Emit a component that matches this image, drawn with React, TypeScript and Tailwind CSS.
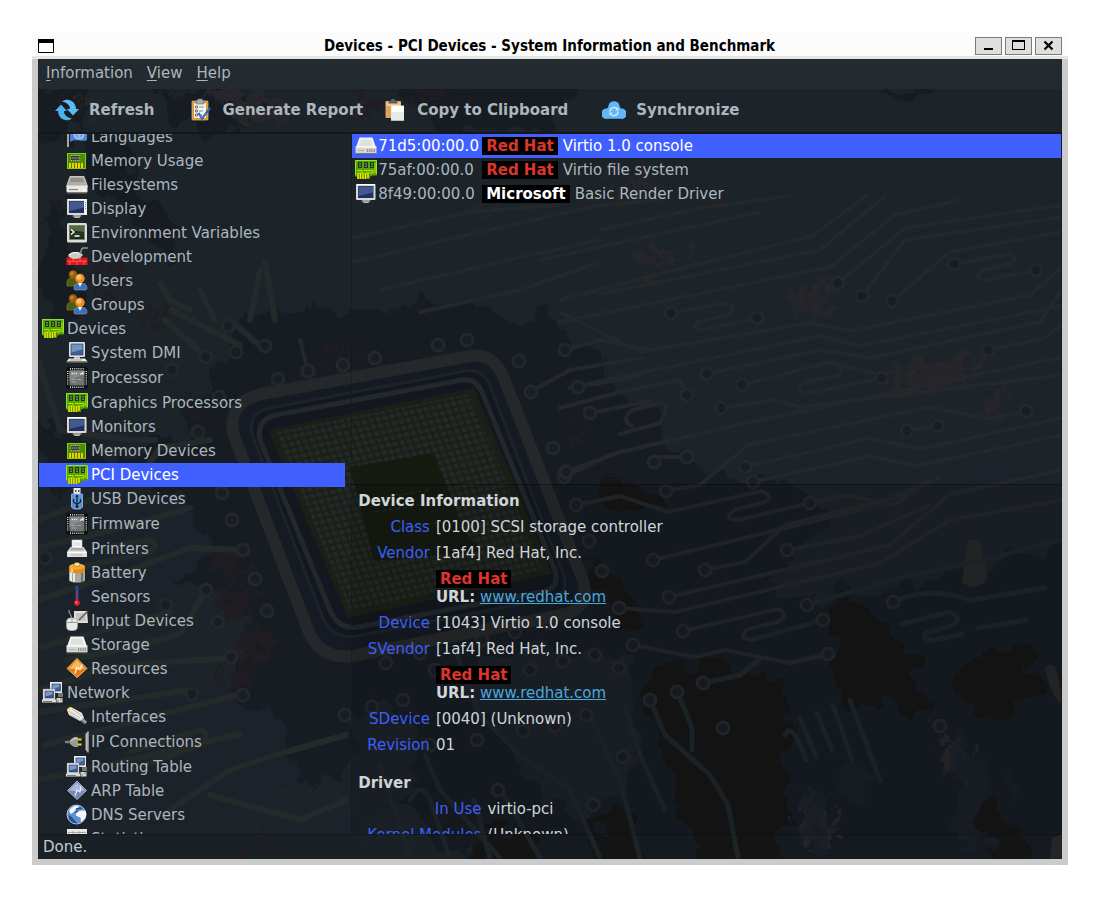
import type { ReactNode } from "react";

/* ---------- icon drawings, all on a 24 unit grid ---------- */

const Board = () => (
  <>
    <path d="M1 2h22v15.500h-5l-1 1H1z" fill="#4fa800" />
    <path d="M1.500 17V2.500h21V16" stroke="#8ae234" fill="none" />
    <path d="M21 5v10M3 12.500h5v3M10 12.500h9v2.500h-7M4 15h3" stroke="#c8dc00" strokeWidth="1" fill="none" />
    <path d="M4 4h4v6H4zM10 4h4v6h-4zM16 4h4v6h-4z" fill="#26331b" />
    <path d="M6 5v4M12 5v4M18 5v4" stroke="#a9b79c" strokeWidth="1.200" strokeDasharray="1.500 1" />
    <path d="M3 15.500h13V21H3z" fill="#4f8a06" />
    <path d="M4 15v6M6.500 15v6M9 15v6M11.500 15v6M14 15v5" stroke="#f2e300" strokeWidth="1.500" />
  </>
);

const Ram = () => (
  <>
    <rect x="2.500" y="4.500" width="18" height="15" fill="#4c8c08" stroke="#73d216" />
    <path d="M4 14h15v5H4z" fill="#6b6f00" />
    <path d="M5 14v5M8 14v5M11 14v5M14 14v5M17 14v5" stroke="#f5dc00" strokeWidth="1.800" />
    <path d="M6 7h8v5H6z" fill="#3d4038" />
    <path d="M6 6.500h9M5 9h10M6 11.500h9" stroke="#b9bdb3" strokeWidth="1.200" strokeDasharray="1.200 .9" />
  </>
);

const Drive = () => (
  <>
    <path d="M5.500 3.500h13L22 13.500H2z" fill="#f4f4f2" />
    <path d="M5 12l2-6.500h10L19 12z" fill="#e0e0dd" />
    <path d="M1.500 13h21v6.500h-21z" fill="#d6d6d2" />
    <path d="M1.500 13h21" stroke="#fff" />
    <path d="M4 16.500h6" stroke="#aeb0aa" />
    <path d="M13 16.500h8" stroke="#8d8f8a" strokeWidth="3" strokeDasharray="1 .8" />
    <path d="M2 20h20" stroke="#555753" />
  </>
);

const Disk = () => (
  <>
    <path d="M5 3.500h14l3.500 10h-21z" fill="#b0aca7" stroke="#deddd9" strokeWidth=".8" />
    <path d="M6 5h12l1 4H5z" fill="#938e87" />
    <rect x="1.500" y="12.500" width="21" height="7" rx="1" fill="#e8e8e5" />
    <path d="M4 16.500h9" stroke="#888a85" strokeWidth="1.200" />
    <circle cx="19" cy="17" r="1" fill="#fff" />
    <path d="M2 20h20" stroke="#6d6f6b" />
  </>
);

const Monitor = () => (
  <>
    <rect x="2" y="2" width="19.500" height="16" rx="1" fill="#d9d9d6" />
    <rect x="4" y="4" width="15.500" height="12" fill="#1f2f5f" />
    <path d="M4.500 4.500h14.500v6L4.500 14z" fill="#44598f" />
    <path d="M8 18h8l-1.500 3h-5z" fill="#b9bbb6" />
    <path d="M7.500 19h9" stroke="#888a85" strokeWidth="1.200" />
    <path d="M2.500 2.500h18.500" stroke="#fff" />
  </>
);

const Display = () => (
  <>
    <Monitor />
    <path d="M19 2h3v16h-3z" fill="#efefed" />
    <path d="M20.500 5v8" stroke="#8b8d88" strokeDasharray="1 1" />
  </>
);

const Terminal = () => (
  <>
    <rect x="2" y="2" width="20" height="19.500" rx="1.500" fill="#dcdcd8" />
    <rect x="4.500" y="4.500" width="15" height="14" fill="#1c2a18" stroke="#7a7c77" strokeWidth=".8" />
    <path d="M5 5h14v6L5 9z" fill="#55693f" />
    <path d="M5 12.500h14M5 15h14" stroke="#33452a" />
    <path d="M6 8.500l3 2.500-3 2.500M9.500 15h5" stroke="#fff" strokeWidth="1.300" fill="none" />
  </>
);

const Trowel = () => (
  <>
    <path d="M1.500 12.500h21v7.500h-21z" fill="#e3171b" />
    <path d="M2 16.200h20M8 12.500v4M15 12.500v4M5 16.500v3.500M12 16.500v3.500M19 16.500v3.500" stroke="#ff7070" strokeWidth=".8" />
    <path d="M3 11c2-4 7-5 13-3l2 2-3 3c-5 2-9 1-12-2z" fill="#c9cbc6" />
    <path d="M4 10c3-3 7-3 11-1.500" stroke="#fff" fill="none" strokeWidth="1.200" />
    <path d="M15 9c2-2 0-5 3-6h5" stroke="#8f918c" strokeWidth="1.500" fill="none" />
  </>
);

const People = () => (
  <>
    <path d="M2 14c0-4 2-5 5-5s5 2 5 6v2H2z" fill="#4e5d12" stroke="#737f2a" strokeWidth=".7" />
    <circle cx="8" cy="5.500" r="4.200" fill="#9a5c08" />
    <circle cx="7" cy="4.500" r="2" fill="#b9802e" />
    <path d="M9 20c0-5 2-6 6-6s7 1 7 6l-2 1H10z" fill="#3f6fb4" stroke="#7397cb" strokeWidth=".7" />
    <path d="M13 14l2 4 2-4z" fill="#fff" />
    <circle cx="15" cy="9.500" r="4.700" fill="#ee8e1c" />
    <circle cx="14" cy="8.300" r="2.500" fill="#ffc074" />
  </>
);

const Computer = () => (
  <>
    <rect x="4" y="1" width="16" height="15" rx="1" fill="#e1e0dc" />
    <rect x="6" y="3" width="12" height="11" fill="#3e5e93" stroke="#2a416e" strokeWidth=".7" />
    <path d="M6.500 3.500h11v5l-11 3z" fill="#7092c4" />
    <path d="M9 16h6v2H9z" fill="#b9bbb6" />
    <path d="M4 17.500h16l2.500 3h-21z" fill="#f0efec" />
    <path d="M5 19h12" stroke="#999b95" />
    <path d="M1.500 21h21" stroke="#777" strokeWidth="1.200" />
  </>
);

const Chip = () => (
  <>
    <rect x="1" y="1" width="22" height="22" rx="3" fill="#0d0f10" />
    <path
      d="M5 2.700h14.500M5 21.300h14.500M2.700 5v14.500M21.300 5v14.500"
      stroke="#e2e2e2"
      strokeWidth="1.400"
      strokeDasharray="1 1.100"
    />
    <rect x="4.500" y="4.500" width="15" height="15" fill="#717472" />
    <path d="M4.500 4.500h15v3l-15 8z" fill="#858886" />
    <path d="M6.500 7.500h6" stroke="#dedede" strokeWidth="1.600" strokeDasharray="1.500 .6" />
    <path d="M15 8.500l3-2v2.500" stroke="#e8e8e8" strokeWidth="1.200" fill="none" />
    <path d="M6.500 13.500h4M12 13.500h4M6.500 16h5" stroke="#a5a7a5" />
  </>
);

const Usb = () => (
  <>
    <path d="M8.500 1h7v6h-7z" fill="#e8e8e8" />
    <path d="M10 3h1.500v2H10zM13 3h1.500v2H13z" fill="#555" />
    <path d="M6.500 7h11v13l-2 2h-7l-2-2z" fill="#5b92cf" stroke="#96bbe2" strokeWidth=".8" />
    <path d="M12 8v12M8.500 12v3l3.500 2.500 3.500-2.500v-3" stroke="#0d2540" strokeWidth="1.300" fill="none" />
    <circle cx="12" cy="19.500" r="1.500" fill="#0d2540" />
    <path d="M10.500 10L12 7.500l1.500 2.500z" fill="#0d2540" />
  </>
);

const Printer = () => (
  <>
    <path d="M7 3h10v9H7z" fill="#fff" stroke="#bbb" strokeWidth=".7" />
    <path d="M8.500 6h7M8.500 8h7" stroke="#c9c9c6" />
    <path d="M5.500 10h13l3.500 5v5H2v-5z" fill="#dededb" />
    <path d="M6 11h12l1 2.500H5z" fill="#a9aba6" />
    <path d="M2.500 15.500h19" stroke="#fff" strokeWidth="1.200" />
    <path d="M6 18h12" stroke="#b9bbb6" />
  </>
);

const Battery = () => (
  <>
    <path d="M4 7v12c0 3.500 16 3.500 16 0V7z" fill="#a5a7a2" />
    <path d="M6 8v12M9 9v12" stroke="#e8e8e6" strokeWidth="2" />
    <path d="M17 9v12" stroke="#6f716c" strokeWidth="2" />
    <path d="M4 6v4c0 3 16 3 16 0V6z" fill="#e38b14" />
    <path d="M7 7v4.500" stroke="#ffce7a" strokeWidth="2.500" />
    <ellipse cx="12" cy="5.500" rx="8" ry="3" fill="#f3aa3d" />
    <ellipse cx="12" cy="3.500" rx="3" ry="2" fill="#ffe0a3" stroke="#b56b08" strokeWidth=".7" />
  </>
);

const Sensor = () => (
  <>
    <path d="M12 1v17" stroke="#204a9c" strokeWidth="3" />
    <path d="M12 6v12" stroke="#ef2929" strokeWidth="1.400" strokeDasharray="1.300 .6" />
    <circle cx="12" cy="18" r="2.800" fill="#f21d2d" />
    <circle cx="11.300" cy="17.300" r=".9" fill="#ff9a9a" />
  </>
);

const Input = () => (
  <>
    <path d="M9 2h13l1 12H9z" fill="#dfdfd7" />
    <path d="M11 4h9l1 8H11z" fill="#c3c5bc" />
    <path d="M23 2l-9 9" stroke="#555753" strokeWidth="1.500" />
    <path d="M6 10C7 5 4 6 4 1" stroke="#bbb" fill="none" />
    <rect x="1.500" y="9" width="11" height="12.500" rx="4" fill="#e9e9e6" stroke="#a9aba6" strokeWidth=".8" />
    <path d="M2 13.500h10M7 9.500v4" stroke="#9a9c97" />
  </>
);

const Resources = () => (
  <>
    <path d="M12 1.500L22 11.500l-10 9-10-9z" fill="#e57e0e" stroke="#ffd08a" strokeWidth=".8" />
    <path d="M12 3l8 8.500-8 1-8-1z" fill="#f9b65e" />
    <path d="M10 16.500l2-6 3 2 2-5" stroke="#fff2d9" strokeWidth="1.300" fill="none" />
  </>
);

const Network = () => (
  <>
    <path d="M9 1h12v11H9z" fill="#e9e8e4" />
    <path d="M11 3h8.500v7H11z" fill="#43639b" stroke="#22365f" strokeWidth=".6" />
    <path d="M17 12h5v4h-5z" fill="#73756f" />
    <path d="M2 8h12v11H2z" fill="#f0efeb" stroke="#77796f" strokeWidth=".5" />
    <path d="M4 10h8.500v7H4z" fill="#34548b" stroke="#22365f" strokeWidth=".6" />
    <path d="M4.500 10.500h7v3l-7 2zM11.500 3.500h7v2l-7 3z" fill="#7b9acb" />
    <path d="M1 18.500h14v3H1zM15.500 17h6v4.500h-6z" fill="#dddcd7" />
    <path d="M2 20.500h9M17 18.500v3M20 16.500v3" stroke="#77796f" />
  </>
);

const Plug = () => (
  <>
    <path d="M14 12l7 6" stroke="#6f716d" strokeWidth="4" />
    <path d="M2 5l4-3 11 6 2 5-4 3L4 10z" fill="#e9e9e5" />
    <path d="M4 6l11 7M7 4l10 7M5 9l9 6" stroke="#b5b7b1" strokeWidth=".9" />
    <path d="M2 4l3-2 2 2-3 3z" fill="#ffe38a" />
    <path d="M17 14l4 4" stroke="#b0b2ad" strokeWidth="1.200" />
  </>
);

const Connection = () => (
  <>
    <path d="M0 12h7" stroke="#80827d" strokeWidth="2.500" />
    <path d="M5 10l4-3h4v10H9l-4-3z" fill="#999b96" />
    <path d="M6 10.500l4-2h2" stroke="#ddd" fill="none" />
    <path d="M13 9.500h3.500M13 14.500h3.500" stroke="#f1dd00" strokeWidth="2" />
    <path d="M20.500 4l2-2v20l-2-2z" fill="#b9bbb5" />
    <path d="M23 1.500v21" stroke="#efefec" />
  </>
);

const Arp = () => (
  <>
    <path d="M12 2l9.500 9.500L12 20.500 2.500 11.500z" fill="#7488b4" stroke="#b9c6e0" strokeWidth=".8" />
    <path d="M12 3.500l8 8-8 1-8-1z" fill="#a9b8d6" />
    <path d="M10 17l2-6 3 2 1-6" stroke="#edf2fb" strokeWidth="1.100" fill="none" />
  </>
);

const Globe = () => (
  <>
    <circle cx="11.500" cy="11.500" r="9.500" fill="#5d90cf" stroke="#c6dbf2" strokeWidth=".8" />
    <path d="M4 8c2-4 6-6 10-5-1 3-4 2-4 5l-4 3zM11 10c4-3 8-3 10-1 1 5-2 8-5 10-1-3 1-4-2-5s-4-2-3-4z" fill="#f3f7fc" />
    <path d="M3.500 12c2 1 4 2 5 4l4 4.500c-5 0-9-3-9-8.500z" fill="#204f93" />
    <path d="M11 6l6-1M10 10l3-2" stroke="#204f93" strokeWidth="1.500" />
  </>
);

const Flag = () => (
  <>
    <path d="M3 2v20" stroke="#a6a8a3" strokeWidth="2" />
    <path d="M5 2h17v13c-5 3-10-2-17 2z" fill="#4c86cf" />
    <circle cx="14" cy="9" r="5" fill="#6f9fdc" stroke="#b4d1f2" strokeWidth="1.200" />
    <path d="M9 9h10M14 4v10" stroke="#b4d1f2" />
  </>
);

const Sheet = () => (
  <>
    <rect x="2" y="2" width="20" height="19" fill="#e9e9e6" />
    <path d="M3 5.500h18M3 10h18M8 4v16M14 4v16" stroke="#a5a7a2" />
  </>
);

const RefreshIcon = () => (
  <>
    <path d="M0 13l6-6.500L12 13H9c0 4 3 6.500 8 7.500-6 4.500-14 0-14-7.500z" fill="#4db1f0" />
    <path d="M24 11l-6 6.500L12 11h3c0-4-3-6.500-8-7.500 6-4.500 14 0 14 7.500z" fill="#5abcf7" />
  </>
);

const ReportIcon = () => (
  <>
    <rect x="4" y="3" width="16" height="19" rx="1" fill="#d9943a" stroke="#f0bd75" strokeWidth=".7" />
    <path d="M6 5h12v15H6z" fill="#f4f4f1" />
    <path d="M8 4l2-3h4l2 3v2H8z" fill="#a9aba6" stroke="#666" strokeWidth=".6" />
    <path d="M7.500 8h2v2h-2zM7.500 12h2v2h-2zM7.500 16h2v2h-2z" fill="none" stroke="#555" strokeWidth=".8" />
    <path d="M11 9h5M11 13h4M11 17h3" stroke="#8a8c87" />
    <path d="M10.500 15l3.500 5.500L22 10" fill="none" stroke="#2f62b5" strokeWidth="2.200" />
    <path d="M11.500 17l2.500 3 4-5" fill="none" stroke="#7da5e0" strokeWidth=".7" />
  </>
);

const ClipboardIcon = () => (
  <>
    <rect x="2.500" y="3" width="15.500" height="17" rx="1" fill="#dba659" />
    <path d="M3 4h14.500v4H3z" fill="#f0c88e" />
    <path d="M5.500 5l2-2c0-3 5-3 5 0l2 2z" fill="#62656a" stroke="#34373a" strokeWidth=".7" />
    <path d="M8 7.500h13V23H8z" fill="#e9e9e6" />
    <path d="M8.500 8h12v6h-12z" fill="#fff" />
    <path d="M8 22.500h13" stroke="#b9bbb6" />
  </>
);

const CloudIcon = () => (
  <>
    <path d="M5 21a5 5 0 01-1-10.500c1.500 0 2-.5 2.500-3a5.700 5.700 0 0111 0c.5 2.500 1 3 2.500 3A5 5 0 0119 21z" fill="#62b7f4" />
    <path d="M4.500 20.500h15" stroke="#3c93d8" />
    <path d="M8 13.500a4 4 0 017.500-2M16 13.500a4 4 0 01-7.500 2" stroke="#d9effc" strokeWidth="1.200" fill="none" />
    <path d="M16.500 9.500v3h-3zM7.500 17.500v-3h3z" fill="#d9effc" />
  </>
);

const Icon = ({ children }: { children: ReactNode }) => (
  <svg viewBox="0 0 24 24" aria-hidden="true" className="size-6 shrink-0">
    {children}
  </svg>
);

/* ---------- circuit board backdrop ---------- */

const copper = [
  "M352 238L470 212 560 205",
  "M352 262L480 232 600 205 660 200",
  "M380 290L500 262 600 240",
  "M420 312L520 290 600 262",
  "M540 260L760 212",
  "M600 230L700 208 790 196",
  "M560 300L690 266 812 236 866 196",
  "M600 294L820 250 885 196",
  "M560 322L830 267 895 215 960 200",
  "M838 283L905 228 1062 205",
  "M862 296L905 240 1062 217",
  "M892 301L950 252 1062 232",
  "M954 264L1010 254Q1020 258 1010 264L980 271Q974 280 986 280L1036 270",
  "M671 313L726 303Q738 307 728 315L700 321Q688 328 702 330L757 318",
  "M560 312L640 352 810 323 850 331 1030 295 1062 268",
  "M570 388L620 377 820 336 860 346 1062 306",
  "M707 374L820 350 870 358 1040 322 1062 290",
  "M742 385L830 362 876 374",
  "M882 378L806 394Q792 388 806 382L838 375Q846 370 838 366",
  "M988 350L1045 338 1062 325",
  "M566 472L620 452 760 420 1062 357",
  "M666 491L700 485 748 445 930 407 990 419 1026 411",
  "M721 408L775 400 800 407 1062 375",
  "M687 395L680 380 620 392 560 408",
  "M745 467L870 438 920 449 1062 418",
  "M753 482L870 456 915 466 1062 435",
  "M907 431L938 426",
  "M654 457L687 457",
  "M576 505L620 496 668 512 762 491Q776 498 762 503L734 510Q722 520 738 520L810 503 845 495 895 505 925 482",
  "M620 434L660 423Q672 402 660 403L632 410Q620 420 632 426",
  "M653 560L860 510 940 478",
  "M705 570L745 562 785 525 905 495",
  "M669 597L890 545 950 494 1062 470",
  "M619 608L675 612 880 563 950 520 1062 500",
  "M787 550L860 536 930 505",
  "M683 631L778 609Q790 615 778 622L748 629Q736 638 752 640",
  "M633 645L695 657 725 650 790 663 830 654",
  "M740 675L760 660",
  "M565 350L600 340 650 350",
  "M530 392L570 370 640 358",
  "M578 387L640 376",
  "M590 413L650 401",
  "M564 477L610 455",
  "M300 340L308 371",
];

const tealTraces = [
  "M807 605L900 578 985 560 1060 540",
  "M893 602Q930 585 970 600L1045 588",
  "M752 640L823 620",
  "M790 663L828 654",
  "M703 683L740 675 758 660",
  "M650 700L665 735 710 775 728 805 738 858",
  "M677 692Q690 720 692 730V750",
  "M901 624L950 612Q965 620 950 626L926 633Q920 640 935 640L962 634",
  "M978 628L1026 620",
  "M625 705L640 755 665 810",
  "M590 715L620 780 640 858",
  "M785 735Q790 725 798 740L806 760",
  "M800 718L816 757M817 713L832 750M833 705L852 760M850 700L880 780",
  "M455 650L480 715 520 755 570 790 600 858",
  "M425 755L440 790 500 858",
  "M380 765L410 858",
  "M500 788L540 858",
  "M410 800Q420 780 430 800L450 858",
  "M474 800L490 858",
];

const leftTraces = [
  "M38 548L120 528 190 508",
  "M38 580L90 565 150 552Q160 545 150 540L100 548",
  "M38 600L130 570 190 548 243 550",
  "M66 660L110 652 180 634 206 590",
  "M38 648L170 612",
  "M38 690L120 665 231 658",
  "M38 712L190 690",
  "M45 745L160 715 240 694",
  "M130 770L200 745Q212 735 200 730L130 752",
  "M38 780L130 760 240 734",
  "M170 810L230 770 275 755 346 735",
  "M210 795L300 820 346 800",
  "M145 470L160 448 210 440",
  "M38 520L90 500",
  "M60 430L130 440 155 440",
  "M38 360L60 430",
  "M160 284L170 300 190 310M200 290L215 320M260 270L250 320M265 262L275 320",
  "M165 320L205 356M172 310L240 345M230 320L265 350",
];

const rings: [number, number][] = [
  [206, 357], [228, 326], [236, 352], [265, 346], [278, 379], [308, 371], [343, 365], [375, 358],
  [438, 345], [467, 340], [519, 361], [531, 392], [578, 387], [590, 413], [553, 448], [564, 477],
  [576, 505], [589, 541], [602, 571], [219, 397], [198, 432], [172, 370],
  [222, 493], [232, 520], [243, 550], [255, 579], [267, 611], [206, 590], [218, 622], [231, 657],
  [166, 605], [192, 694], [243, 695], [45, 558], [386, 663], [420, 653], [482, 640], [515, 632],
  [549, 623], [530, 670], [563, 661], [595, 655], [435, 670], [403, 700], [372, 707], [345, 715],
  [619, 668], [650, 700], [677, 692], [586, 715], [477, 740], [523, 731], [555, 726], [498, 790],
  [430, 745], [633, 645], [703, 683], [683, 631], [823, 620], [828, 654], [807, 605], [619, 608],
  [669, 597], [653, 560], [705, 570], [787, 550], [666, 491], [810, 503], [654, 462], [687, 457],
  [745, 467], [753, 482], [707, 374], [742, 385], [721, 408], [687, 395], [671, 313], [757, 318],
  [838, 283], [862, 296], [892, 301], [882, 378], [988, 350], [1026, 411], [907, 431], [938, 426],
  [954, 264], [1036, 270], [566, 472], [565, 350], [893, 602], [723, 728], [940, 726], [593, 805],
  [623, 757],
];

const Backdrop = () => (
  <svg
    viewBox="38 59 1024 800"
    preserveAspectRatio="none"
    aria-hidden="true"
    className="pointer-events-none absolute inset-0 size-full"
    fill="none"
    strokeLinecap="round"
    strokeLinejoin="round"
  >
    <defs>
      <pattern id="pads" width="7" height="7" patternUnits="userSpaceOnUse" patternTransform="matrix(.98 -.2 .37 .93 0 0)">
        <circle cx="3.500" cy="3.500" r="2.500" fill="#25282a" />
      </pattern>
      <filter id="ragged" x="-5%" y="-5%" width="110%" height="110%">
        <feTurbulence type="fractalNoise" baseFrequency=".03" numOctaves="4" seed="7" />
        <feDisplacementMap in="SourceGraphic" scale="50" xChannelSelector="R" yChannelSelector="G" />
      </filter>
      <filter id="speckle" x="-5%" y="-5%" width="110%" height="110%">
        <feTurbulence type="fractalNoise" baseFrequency=".08" numOctaves="3" seed="3" />
        <feDisplacementMap in="SourceGraphic" scale="60" xChannelSelector="R" yChannelSelector="G" />
      </filter>
    </defs>
    <rect x="38" y="59" width="1024" height="800" fill="#1c2329" />
    <g fill="#161a23" filter="url(#ragged)">
      <path d="M20 420l40 0 60 40 60-30 30-50 30-60 60-10 80 10 70-20 100 20 50 40 60 80 60 40 80 10 60 40 110-10 110-30v400H560l-120-40-60-70-70 10-90-30-80 60-40-40 60-60 70-30 20-70-70-40-90-10z" />
      <path d="M20 80h70l-10 50H20zM160 89h100l20 30-60 14h-40zM390 80h180l-10 50H440l-20-20zM880 89h48l-8 8-20 4zM70 134h40l40 60 40 60-20 10-70-70zM40 200l20 0 20 80-10 60-30-40z" />
    </g>
    <g fill="#1c2329" filter="url(#ragged)">
      <path d="M20 500l100-20 70 10 15 60-55 60-130 20zM20 690l160-20 90 40 30 60-60 40-130 10-90-20zM346 720l40-20 30 30-10 70-60 40zM480 660l90-10 60 20 10 90-50 60-60-40-60-80zM840 490l240-30v80l-250 60-60-10z" />
    </g>
    <g fill="#121518" filter="url(#ragged)">
      <path d="M654 662l90 10 40 12 10 50-15 144H690l-10-80-30-90zM830 606l50 8 20 40 30 20v40l-40-10-20 10-40-30zM962 668l30-14 40-4v40l-20 28-50-10zM600 805l30 20 30 54h-60zM985 790l30 30 10 59h-40zM480 830h60v49h-60zM600 470l60 30 10 14-70-14zM590 560l20 60 30 10-10-50z" />
    </g>
    <g fill="#241c20" opacity=".75" filter="url(#speckle)">
      <path d="M215 555h30v20h-30zM220 590h30v25h-30zM240 630h25v30h-25zM225 668h30v18h-30zM410 96h60v6h-60zM95 265h30v12h-30zM100 290h20v14h-20zM145 305h20v20h-20zM215 415h20v14h-20zM185 402h20v8h-20zM55 195h12v20H55zM250 840h30v10h-30zM350 96h24v16h-24zM572 432h14v16h-14zM320 350h40v8h-40zM60 92h10v25H60z" />
    </g>
    <g fill="#25282a" filter="url(#speckle)">
      <path d="M640 250h36l10 12-60 8zM790 310l14-22 24-2 4 30zM890 370l60-14 30 4-20 24-60 10zM985 390h16v28h-16zM600 184l50-6 20 10-40 6zM800 800l12-6 24 20-2 22-14 14-16-20zM943 740l10-4 18 16-16 20-12-8zM75 95h30l-4 16H80zM210 92h70l10 24-50 6zM480 210h20v6h-20z" />
    </g>
    <g fill="#25282a">
      <path d="M968 540h12l8 38q-12 16-26 4zM1045 668q8-8 12 4l5 24v8q-10-4-17-36zM1052 838l10-4v25h-12z" />
    </g>
    <g fill="#1c2329" opacity=".8" filter="url(#ragged)">
      <path d="M835 775l20-14 18 18v16l-14 8-24-14zM950 745l20-10 18 38-6 50 6 22-16 4-20-30zM800 800l12-4 16 0v50l-16 8-12-20zM1005 775h12l4 20-8 8zM730 869l10-12 10 22z" />
    </g>
    <g stroke="#1e262b" strokeWidth="5">
      {tealTraces.map((d) => (
        <path key={d} d={d} />
      ))}
    </g>
    <g stroke="#24282a" strokeWidth="4">
      {copper.map((d) => (
        <path key={d} d={d} />
      ))}
    </g>
    <g stroke="#24292a" strokeWidth="6">
      {leftTraces.map((d) => (
        <path key={d} d={d} />
      ))}
    </g>
    <g stroke="#25282a" strokeWidth="3" fill="#181e26">
      {rings.map(([x, y]) => (
        <circle key={`${x}-${y}`} cx={x} cy={y} r="6" />
      ))}
    </g>
    <path d="M262 394L470 356Q492 352 503 376L582 578Q592 606 566 614L352 656Q320 660 308 630L234 436Q226 402 262 394z" fill="#161a23" stroke="#25282a" strokeWidth="12" />
    <path d="M270 408L466 371Q482 368 490 386L563 574Q570 592 552 598L356 636Q332 640 322 616L252 434Q248 412 270 408z" fill="#14171f" stroke="#1c2429" strokeWidth="3" />
    <path d="M276 415L462 380Q476 378 482 392L555 570Q560 586 546 591L358 627Q338 630 330 610L260 440Q256 420 276 415z" stroke="#22282b" strokeWidth="5" />
    <path d="M268 430L474 388 552 574 348 618z" fill="#1a2017" />
    <path d="M276 432L470 394 542 570 350 610z" fill="url(#pads)" />
    <path d="M350 467l84-14 30 78 18 20-108 10z" fill="#151b11" />
    <path d="M370 500l60-10M376 512l60-10M392 530l50-8" stroke="#20251c" strokeWidth="2" strokeDasharray="3 4" />
  </svg>
);

/* ---------- data ---------- */

type Item = { label: string; icon: ReactNode; top?: boolean; tall?: boolean; selected?: boolean };

const tree: Item[] = [
  { label: "Languages", icon: <Flag /> },
  { label: "Memory Usage", icon: <Ram /> },
  { label: "Filesystems", icon: <Disk /> },
  { label: "Display", icon: <Display /> },
  { label: "Environment Variables", icon: <Terminal /> },
  { label: "Development", icon: <Trowel /> },
  { label: "Users", icon: <People /> },
  { label: "Groups", icon: <People /> },
  { label: "Devices", icon: <Board />, top: true },
  { label: "System DMI", icon: <Computer /> },
  { label: "Processor", icon: <Chip />, tall: true },
  { label: "Graphics Processors", icon: <Board /> },
  { label: "Monitors", icon: <Monitor /> },
  { label: "Memory Devices", icon: <Ram /> },
  { label: "PCI Devices", icon: <Board />, selected: true },
  { label: "USB Devices", icon: <Usb /> },
  { label: "Firmware", icon: <Chip />, tall: true },
  { label: "Printers", icon: <Printer /> },
  { label: "Battery", icon: <Battery /> },
  { label: "Sensors", icon: <Sensor /> },
  { label: "Input Devices", icon: <Input /> },
  { label: "Storage", icon: <Drive /> },
  { label: "Resources", icon: <Resources /> },
  { label: "Network", icon: <Network />, top: true },
  { label: "Interfaces", icon: <Plug /> },
  { label: "IP Connections", icon: <Connection />, tall: true },
  { label: "Routing Table", icon: <Network /> },
  { label: "ARP Table", icon: <Arp /> },
  { label: "DNS Servers", icon: <Globe /> },
  { label: "Statistics", icon: <Sheet /> },
];

const devices = [
  { address: "71d5:00:00.0", vendor: "Red Hat", name: "Virtio 1.0 console", icon: <Drive />, selected: true },
  { address: "75af:00:00.0", vendor: "Red Hat", name: "Virtio file system", icon: <Board /> },
  { address: "8f49:00:00.0", vendor: "Microsoft", name: "Basic Render Driver", icon: <Monitor /> },
];

const Badge = ({ vendor }: { vendor: string }) => (
  <span
    className={
      vendor === "Red Hat"
        ? "inline-block bg-black px-1 font-bold leading-[18px] text-[#dc352c]"
        : "inline-block bg-black px-1 font-bold leading-[18px] text-white"
    }
  >
    {vendor}
  </span>
);

const Field = ({ label, children }: { label: string; children: ReactNode }) => (
  <>
    <dt className="text-right text-[#3f5ff5]">{label}</dt>
    <dd>{children}</dd>
  </>
);

const VendorValue = ({ id }: { id: string }) => (
  <>
    <div>{id}</div>
    <div className="mt-2">
      <Badge vendor="Red Hat" />
    </div>
    <div>
      <b>URL:</b>{" "}
      <a href="#redhat" className="text-[#4ba6dc] underline">
        www.redhat.com
      </a>
    </div>
  </>
);

const ToolButton = ({ label, icon }: { label: string; icon: ReactNode }) => (
  <button type="button" className="flex items-center gap-[10px] font-bold">
    <Icon>{icon}</Icon>
    {label}
  </button>
);

const windowButton = "flex h-[18px] w-[27px] items-center justify-center border border-[#7b7d7a] bg-[#dde0dc]";

export default function App() {
  return (
    <div className="h-screen bg-white p-8 font-['DejaVu_Sans',sans-serif] text-[15px] leading-[18px] text-[#adb6bd]">
      <div className="flex h-full flex-col">
        <header className="flex h-[27px] shrink-0 items-center border-b-3 border-[#e6e7e2] bg-[#fcfcfc] px-[6px] pt-[3px] text-black">
          <svg viewBox="0 0 16 14" aria-hidden="true" className="h-[14px] w-4">
            <path d="M.5.5h15v13H.5z" fill="#fff" stroke="#000" />
            <path d="M0 0h16v4H0z" fill="#000" />
          </svg>
          <h1 className="flex-1 pl-[70px] text-center font-['DejaVu_Sans_Condensed','DejaVu_Sans',sans-serif] text-[15px] font-bold">
            Devices - PCI Devices - System Information and Benchmark
          </h1>
          <div className="flex gap-[3px]">
            <button type="button" aria-label="Minimize" className={windowButton}>
              <svg viewBox="0 0 13 11" className="h-[11px] w-[13px]">
                <path d="M2 8h9v2H2z" />
              </svg>
            </button>
            <button type="button" aria-label="Maximize" className={windowButton}>
              <svg viewBox="0 0 13 11" className="h-[11px] w-[13px]">
                <path d="M0 0h13v10H0zM1 2v7h11V2z" fillRule="evenodd" />
              </svg>
            </button>
            <button type="button" aria-label="Close" className={windowButton}>
              <svg viewBox="0 0 13 11" className="h-[11px] w-[13px]">
                <path d="M2.500 1.500l8 8M10.500 1.500l-8 8" stroke="#000" strokeWidth="2.200" />
              </svg>
            </button>
          </div>
        </header>

        <div className="flex min-h-0 flex-1 border-x-6 border-b-6 border-[#cbcbcb]">
          <div className="relative flex min-h-0 flex-1 flex-col">
            <Backdrop />
            <nav className="relative flex h-[30px] shrink-0 items-center gap-[14px] bg-[#232b31] px-2 pb-[2px]">
              {["Information", "View", "Help"].map((label) => (
                <button type="button" key={label}>
                  <span className="underline underline-offset-2">{label[0]}</span>
                  {label.slice(1)}
                </button>
              ))}
            </nav>

            <div className="relative flex h-[45px] shrink-0 items-center gap-[34px] border-b-2 border-[#14171d] px-[17px] pb-[2px]">
              <ToolButton label="Refresh" icon={<RefreshIcon />} />
              <div className="flex gap-5">
                <ToolButton label="Generate Report" icon={<ReportIcon />} />
                <ToolButton label="Copy to Clipboard" icon={<ClipboardIcon />} />
              </div>
              <ToolButton label="Synchronize" icon={<CloudIcon />} />
            </div>

            <div className="relative flex min-h-0 flex-1">
              <aside className="w-[30%] shrink-0 overflow-hidden border-l border-black/20">
                <ul className="-mt-[9px]">
                  {tree.map((item) => (
                    <li key={item.label}>
                      <button
                        type="button"
                        className={[
                          "flex w-full items-center gap-[2px] text-left",
                          item.top ? "pl-[2px]" : "pl-[26px]",
                          item.tall ? "h-[26px]" : "h-6",
                          item.selected ? "bg-[#3f60ff] text-white" : "",
                        ].join(" ")}
                      >
                        <Icon>{item.icon}</Icon>
                        {item.label}
                      </button>
                    </li>
                  ))}
                </ul>
              </aside>

              <main className="ml-[6px] flex min-w-0 flex-1 flex-col border-x border-[#14171d]/60">
                <div className="min-h-0 flex-1 overflow-hidden">
                  <table className="w-full border-collapse">
                    <tbody>
                      {devices.map((device) => (
                        <tr key={device.address} className={device.selected ? "h-6 bg-[#3f60ff] text-white" : "h-6"}>
                          <td className="w-[130px] p-0 pl-[2px]">
                            <div className="flex items-center">
                              <Icon>{device.icon}</Icon>
                              {device.address}
                            </div>
                          </td>
                          <td className="p-0">
                            <div className="flex items-center gap-[5px]">
                              <Badge vendor={device.vendor} />
                              {device.name}
                            </div>
                          </td>
                        </tr>
                      ))}
                    </tbody>
                  </table>
                </div>

                <section className="h-1/2 overflow-hidden border-t border-black/30 bg-black/10 px-[6px] pt-[7px] text-[#d0d5d9]">
                  <h2 className="font-bold">Device Information</h2>
                  <dl className="mt-2 grid grid-cols-[max-content_1fr] gap-x-[6px] gap-y-2 pl-[9px]">
                    <Field label="Class">[0100] SCSI storage controller</Field>
                    <Field label="Vendor">
                      <VendorValue id="[1af4] Red Hat, Inc." />
                    </Field>
                    <Field label="Device">[1043] Virtio 1.0 console</Field>
                    <Field label="SVendor">
                      <VendorValue id="[1af4] Red Hat, Inc." />
                    </Field>
                    <Field label="SDevice">[0040] (Unknown)</Field>
                    <Field label="Revision">01</Field>
                  </dl>
                  <h2 className="mt-5 font-bold">Driver</h2>
                  <dl className="mt-2 grid grid-cols-[max-content_1fr] gap-x-[6px] gap-y-2 pl-[9px]">
                    <Field label="In Use">virtio-pci</Field>
                    <Field label="Kernel Modules">(Unknown)</Field>
                  </dl>
                </section>
              </main>
            </div>

            <footer className="relative flex h-[25px] shrink-0 items-center border-t border-black/20 bg-black/5 px-[5px] text-[#c3cace]">
              Done.
            </footer>
          </div>
        </div>
      </div>
    </div>
  );
}
